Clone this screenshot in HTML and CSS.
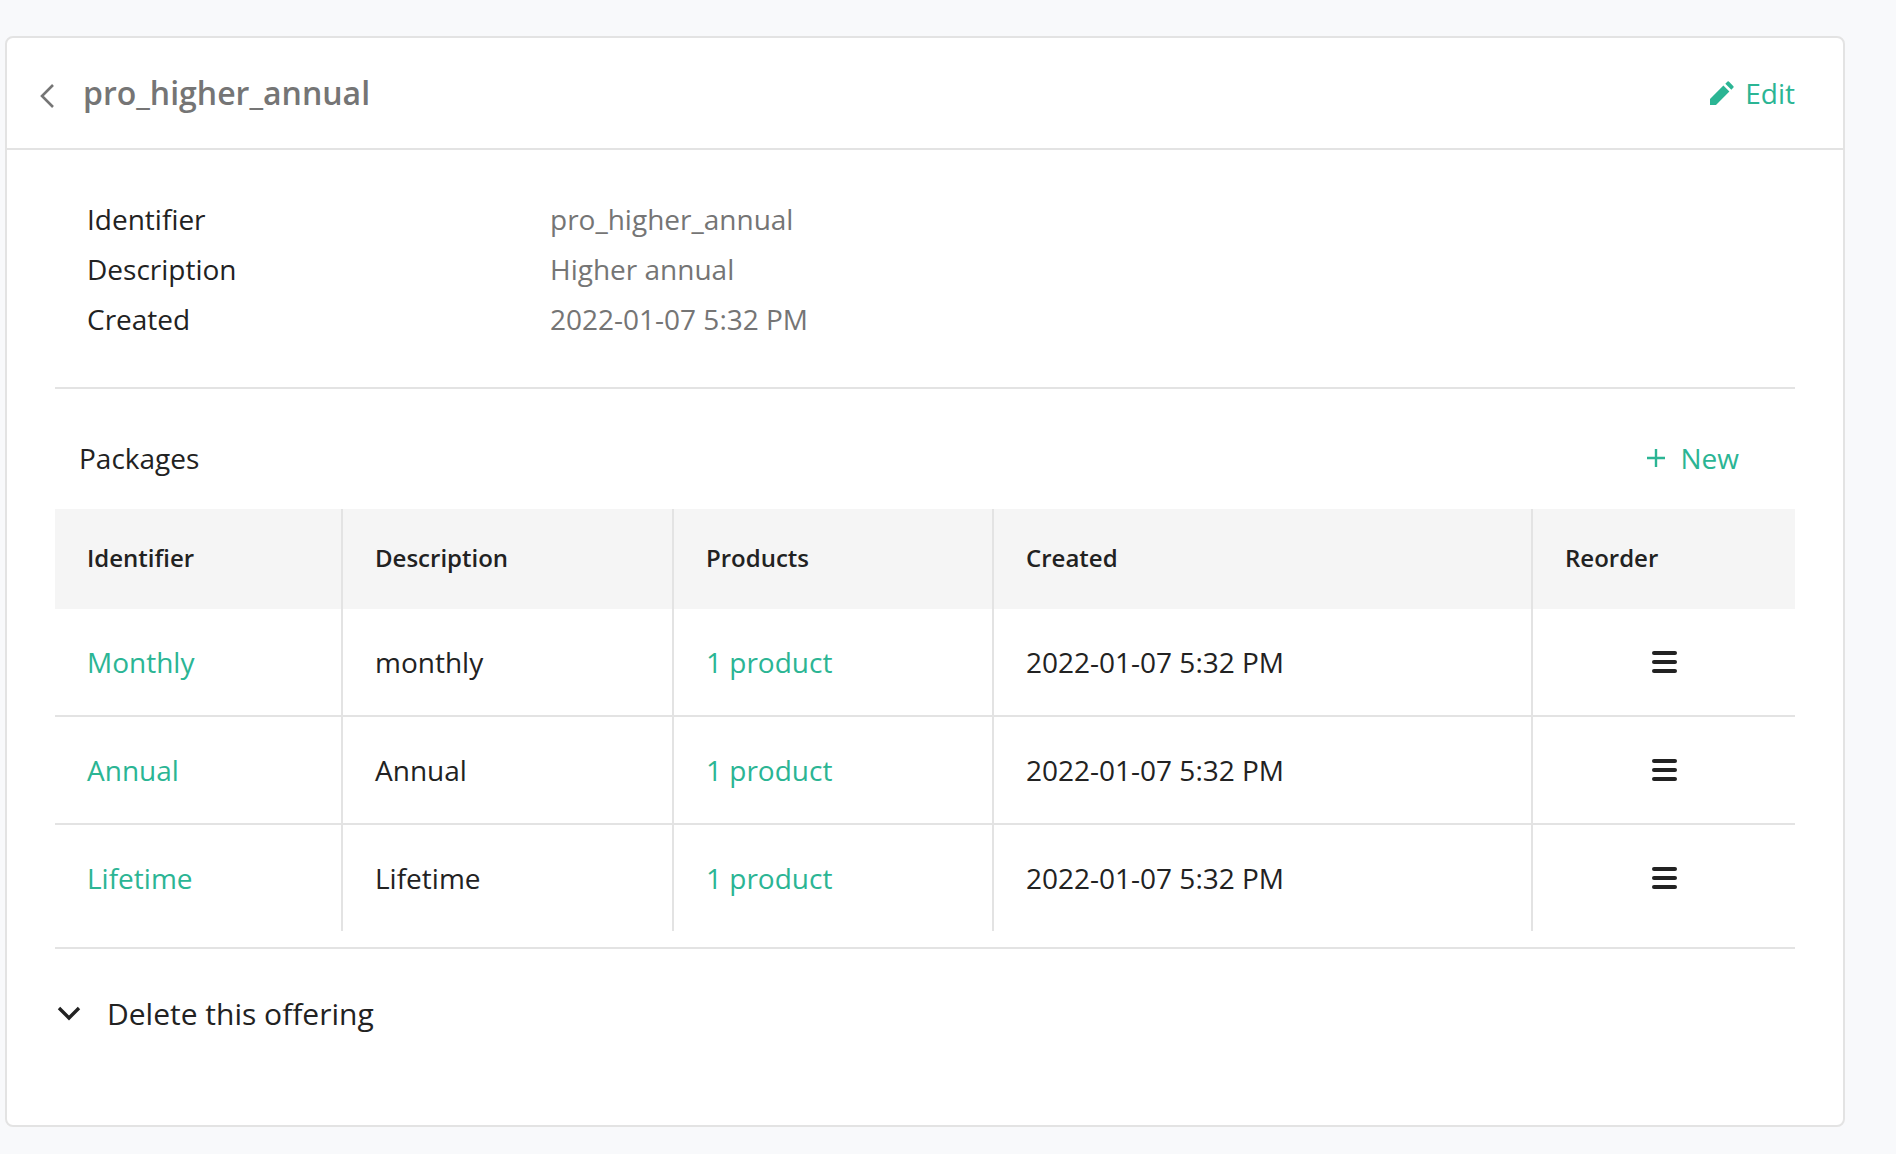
FILE: index.html
```html
<!DOCTYPE html>
<html lang="en">
<head>
    <meta charset="UTF-8">
    <meta name="viewport" content="width=device-width, initial-scale=1.0">
    <title>pro_higher_annual</title>
    <link rel="stylesheet" href="styles.css">
</head>
<body>
    <div class="card">
        <div class="card-header">
            <svg class="back-icon" width="16" height="26" viewBox="0 0 16 26"><path d="M14 2 L3 13 L14 24" fill="none" stroke="#757575" stroke-width="2.6"/></svg>
            <h1 class="title">pro_higher_annual</h1>
            <a class="link edit-link">
                <svg width="24" height="24" viewBox="0 0 26 26"><path d="M0 26 V19.5 L14.5 5 L21 11.5 L6.5 26 Z M16.6 2.9 L19 0.6 Q19.7 0 20.4 0.6 L25.4 5.6 Q26 6.3 25.4 7 L23.1 9.4 Z" fill="#2bb594"/></svg>
                Edit
            </a>
        </div>
        <div class="card-body">
            <div class="info">
                <div class="info-row"><div class="info-label">Identifier</div><div class="info-value">pro_higher_annual</div></div>
                <div class="info-row"><div class="info-label">Description</div><div class="info-value">Higher annual</div></div>
                <div class="info-row"><div class="info-label">Created</div><div class="info-value">2022-01-07 5:32 PM</div></div>
            </div>
            <div class="packages-head">
                <div>Packages</div>
                <a class="link new-link">
                    <svg width="18" height="18" viewBox="0 0 18 18"><path d="M9 0 V18 M0 9 H18" fill="none" stroke="#2bb594" stroke-width="2.4"/></svg>
                    New
                </a>
            </div>
            <table>
                <thead>
                    <tr>
                        <th class="col-id">Identifier</th>
                        <th class="col-desc">Description</th>
                        <th class="col-prod">Products</th>
                        <th class="col-created">Created</th>
                        <th>Reorder</th>
                    </tr>
                </thead>
                <tbody>
                    <tr>
                        <td><a class="link">Monthly</a></td>
                        <td>monthly</td>
                        <td><a class="link">1 product</a></td>
                        <td>2022-01-07 5:32 PM</td>
                        <td class="reorder"><span class="bars"></span></td>
                    </tr>
                    <tr>
                        <td><a class="link">Annual</a></td>
                        <td>Annual</td>
                        <td><a class="link">1 product</a></td>
                        <td>2022-01-07 5:32 PM</td>
                        <td class="reorder"><span class="bars"></span></td>
                    </tr>
                    <tr>
                        <td><a class="link">Lifetime</a></td>
                        <td>Lifetime</td>
                        <td><a class="link">1 product</a></td>
                        <td>2022-01-07 5:32 PM</td>
                        <td class="reorder"><span class="bars"></span></td>
                    </tr>
                </tbody>
            </table>
            <div class="delete-row">
                <svg width="24" height="16" viewBox="0 0 24 16"><path d="M2 3 L12 13 L22 3" fill="none" stroke="#222" stroke-width="3.4"/></svg>
                <span>Delete this offering</span>
            </div>
        </div>
    </div>
</body>
</html>
```

FILE: styles.css
```css
body {
    margin: 0;
    padding: 36px 0 0 5px;
    height: 1154px;
    box-sizing: border-box;
    background-color: #f8f9fb;
    font-family: "Open Sans", sans-serif;
    font-size: 28px;
    color: #222;
}
.card {
    width: 1840px;
    height: 1091px;
    box-sizing: border-box;
    background-color: white;
    border: 2px solid #e3e3e3;
    border-radius: 8px;
}
.card-header {
    display: flex;
    align-items: center;
    height: 110px;
    padding: 0 48px 0 32px;
    border-bottom: 2px solid #e3e3e3;
}
.back-icon {
    margin-right: 28px;
    margin-top: 5px;
}
.title {
    flex: 1;
    margin: 0 0 2px;
    font-size: 32px;
    font-weight: 600;
    color: #757575;
}
.link {
    color: #2bb594;
}
.edit-link, .new-link {
    display: flex;
    align-items: center;
}
.edit-link svg {
    margin-right: 11px;
}
.new-link svg {
    margin-right: 15px;
}
.card-body {
    padding: 0 48px;
}
.info {
    padding: 44px 0 43px 32px;
    border-bottom: 2px solid #e3e3e3;
}
.info-row {
    display: flex;
    height: 50px;
    line-height: 50px;
}
.info-label {
    width: 463px;
}
.info-value {
    color: #757575;
}
.packages-head {
    display: flex;
    justify-content: space-between;
    align-items: center;
    height: 103px;
    padding: 17px 56px 0 24px;
}
table {
    width: 1740px;
    border-collapse: collapse;
    table-layout: fixed;
}
th, td {
    padding: 0 0 0 32px;
    text-align: left;
    border-left: 2px solid #e3e3e3;
}
th:first-child, td:first-child {
    border-left: none;
}
th {
    height: 97px;
    padding-bottom: 3px;
    background-color: #f5f5f5;
    font-size: 24px;
    font-weight: 600;
}
td {
    height: 106px;
    border-bottom: 2px solid #e3e3e3;
}
tbody tr:last-child td {
    border-bottom: none;
}
.col-id { width: 254px; }
.col-desc { width: 297px; }
.col-prod { width: 286px; }
.col-created { width: 505px; }
.reorder {
    padding: 0;
}
.bars {
    display: block;
    width: 25px;
    height: 4px;
    margin: 0 auto;
    background-color: #222;
    box-shadow: 0 -9px 0 #222, 0 9px 0 #222;
    border-radius: 2px;
}
.delete-row {
    display: flex;
    align-items: center;
    height: 128px;
    margin-top: 16px;
    padding: 0 0 2px 2px;
    border-top: 2px solid #e3e3e3;
    font-size: 30px;
}
.delete-row svg {
    margin-right: 26px;
}
```
